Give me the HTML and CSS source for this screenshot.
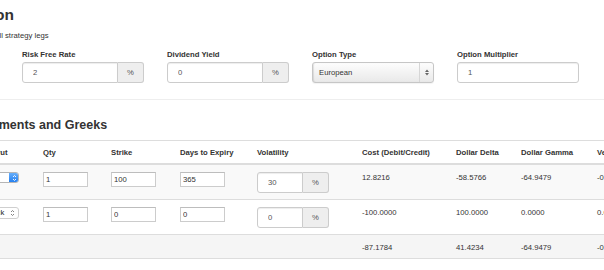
FILE: index.html
```html
<!DOCTYPE html>
<html>
<head>
<meta charset="utf-8">
<title>Option Strategy</title>
<link rel="stylesheet" href="styles.css">
</head>
<body>
<div class="page">
  <section class="config">
    <h2 class="title">Option</h2>
    <p class="hint">Used for all strategy legs</p>
    <div class="form-row">
      <div class="field">
        <label>Risk Free Rate</label>
        <div class="input-group">
          <input class="control joined" value="2">
          <span class="addon">%</span>
        </div>
      </div>
      <div class="field">
        <label>Dividend Yield</label>
        <div class="input-group">
          <input class="control joined" value="0">
          <span class="addon">%</span>
        </div>
      </div>
      <div class="field">
        <label>Option Type</label>
        <div class="select">
          <span class="select-text">European</span>
          <span class="select-arrow">
            <svg width="4" height="7" viewBox="0 0 4 7"><path d="M0 3 L2 0.5 L4 3 Z M0 4 L2 6.5 L4 4 Z" fill="#666"/></svg>
          </span>
        </div>
      </div>
      <div class="field">
        <label>Option Multiplier</label>
        <input class="control" value="1">
      </div>
    </div>
  </section>

  <hr class="divider">

  <section class="legs-section">
    <h3 class="subtitle">Instruments and Greeks</h3>
    <table class="legs">
      <colgroup>
        <col class="w-num"><col class="w-type"><col class="w-qty"><col class="w-strike"><col class="w-days"><col class="w-vol"><col class="w-cost"><col class="w-delta"><col class="w-gamma"><col class="w-vega"><col class="w-theta">
      </colgroup>
      <thead>
        <tr>
          <th>#</th>
          <th class="type-head">Call/Put</th>
          <th>Qty</th>
          <th>Strike</th>
          <th>Days to Expiry</th>
          <th>Volatility</th>
          <th>Cost (Debit/Credit)</th>
          <th>Dollar Delta</th>
          <th>Dollar Gamma</th>
          <th>Vega</th>
          <th>Theta</th>
        </tr>
      </thead>
      <tbody>
        <tr class="odd">
          <td>1</td>
          <td>
            <div class="os-select active">
              <span class="os-text">Call</span>
              <span class="os-stepper">
                <svg width="5" height="8" viewBox="0 0 5 8"><path d="M1 3 L2.5 1.5 L4 3 M1 5 L2.5 6.5 L4 5" fill="none" stroke="#fff" stroke-width="0.9"/></svg>
              </span>
            </div>
          </td>
          <td><input class="num" value="1"></td>
          <td><input class="num" value="100"></td>
          <td><input class="num" value="365"></td>
          <td>
            <div class="input-group vol">
              <input class="control joined" value="30">
              <span class="addon">%</span>
            </div>
          </td>
          <td>12.8216</td>
          <td>-58.5766</td>
          <td>-64.9479</td>
          <td>-0.3821</td>
          <td>-1.2040</td>
        </tr>
        <tr>
          <td>2</td>
          <td>
            <div class="os-select">
              <span class="os-text">Stock</span>
              <span class="os-chevrons">
                <svg width="5" height="8" viewBox="0 0 5 8"><path d="M1 3 L2.5 1.5 L4 3 M1 5 L2.5 6.5 L4 5" fill="none" stroke="#777" stroke-width="0.9"/></svg>
              </span>
            </div>
          </td>
          <td><input class="num" value="1"></td>
          <td><input class="num" value="0"></td>
          <td><input class="num" value="0"></td>
          <td>
            <div class="input-group vol">
              <input class="control joined" value="0">
              <span class="addon">%</span>
            </div>
          </td>
          <td>-100.0000</td>
          <td>100.0000</td>
          <td>0.0000</td>
          <td>0.0000</td>
          <td>0.0000</td>
        </tr>
      </tbody>
      <tfoot>
        <tr>
          <td></td>
          <td></td>
          <td></td>
          <td></td>
          <td></td>
          <td></td>
          <td>-87.1784</td>
          <td>41.4234</td>
          <td>-64.9479</td>
          <td>-0.3821</td>
          <td>-1.2040</td>
        </tr>
      </tfoot>
    </table>
  </section>
</div>
</body>
</html>
```

FILE: styles.css
```css
html, body {
  margin: 0;
  padding: 0;
  overflow: hidden;
  background: #fff;
}

body {
  font-family: "Liberation Sans", Arial, Helvetica, sans-serif;
  font-size: 7.7px;
  line-height: 11px;
  color: #333;
}

.page {
  margin-left: -36px;
  width: 820px;
  padding-top: 6px;
}

.title {
  margin: 0;
  font-size: 15.5px;
  line-height: 17px;
  font-weight: bold;
  color: #333;
}

.hint {
  margin: 7px 0 0;
}

.form-row {
  display: grid;
  grid-template-columns: repeat(4, 122px);
  column-gap: 23px;
  padding-left: 58px;
  margin-top: 8px;
}

.field label {
  display: block;
  font-weight: bold;
  margin-bottom: 2px;
}

.input-group {
  display: flex;
  height: 21px;
}

.control {
  display: block;
  box-sizing: border-box;
  width: 100%;
  min-width: 0;
  height: 21px;
  margin: 0;
  border: 1px solid #ccc;
  border-radius: 3px;
  padding: 0 0 0 10px;
  font: inherit;
  color: #555;
  background: #fff;
  box-shadow: inset 0 1px 1px rgba(0, 0, 0, 0.075);
  outline: none;
}

.control.joined {
  flex: 1;
  border-radius: 3px 0 0 3px;
}

.addon {
  flex: 0 0 26px;
  box-sizing: border-box;
  border: 1px solid #ccc;
  border-left: 0;
  border-radius: 0 3px 3px 0;
  background: #eee;
  display: flex;
  align-items: center;
  justify-content: center;
  color: #555;
}

.select {
  display: flex;
  align-items: stretch;
  box-sizing: border-box;
  height: 21px;
  border: 1px solid #c6c6c6;
  border-radius: 3px;
  background: linear-gradient(#fdfdfd, #e9e9e9);
  box-shadow: inset 1px 0 1px rgba(0, 0, 0, 0.1), 0 1px 1px rgba(0, 0, 0, 0.05);
}

.select-text {
  flex: 1;
  display: flex;
  align-items: center;
  padding-left: 6px;
  color: #333;
}

.select-arrow {
  flex: 0 0 13px;
  border-left: 1px solid #d6d6d6;
  display: flex;
  align-items: center;
  justify-content: center;
}

.divider {
  margin: 16px 0 0;
  height: 0;
  border: 0;
  border-top: 1px solid #eee;
}

.subtitle {
  margin: 18px 0 8px;
  font-size: 12.5px;
  line-height: 14px;
  font-weight: bold;
  color: #333;
}

.legs {
  border-collapse: collapse;
  table-layout: fixed;
  width: 786px;
}

.w-num { width: 14px; }
.w-type { width: 60px; }
.w-qty { width: 68px; }
.w-strike { width: 69px; }
.w-days { width: 77px; }
.w-vol { width: 105px; }
.w-cost { width: 94px; }
.w-delta { width: 65px; }
.w-gamma { width: 76px; }
.w-vega { width: 78px; }
.w-theta { width: 80px; }

.legs th {
  text-align: left;
  font-weight: bold;
  white-space: nowrap;
  overflow: hidden;
  padding: 6px 5px 5px;
  border-top: 1px solid #ddd;
  border-bottom: 2px solid #ddd;
  vertical-align: bottom;
}

.legs th.type-head {
  padding-left: 1px;
}

.legs td {
  padding: 7px 5px 6px;
  border-top: 1px solid #ddd;
  vertical-align: top;
  white-space: nowrap;
}

.legs tbody tr.odd td {
  background: #f9f9f9;
}

.legs tfoot td {
  padding: 7px 5px 5px;
  background: #f5f5f5;
  border-bottom: 1px solid #ddd;
}

.num {
  display: block;
  box-sizing: border-box;
  width: 45px;
  height: 15px;
  margin: 0;
  padding: 0 2px;
  border: 1px solid #ccc;
  border-top-color: #bdbdbd;
  font: inherit;
  color: #333;
  background: #fff;
  outline: none;
}

.input-group.vol {
  width: 72px;
}

.os-select {
  display: flex;
  box-sizing: border-box;
  width: 36px;
  height: 12px;
  border: 1px solid #cfcfcf;
  border-radius: 3px;
  background: #fff;
  overflow: hidden;
}

.os-select.active {
  height: 11px;
  border-color: #b5b5b5;
}

.os-text {
  flex: 1;
  padding-left: 1px;
  line-height: 10px;
  overflow: hidden;
  color: #222;
}

.os-stepper {
  flex: 0 0 10px;
  margin: -1px -1px -1px 0;
  border-radius: 0 3px 3px 0;
  background: linear-gradient(#6db3fb, #1f7cf0);
  display: flex;
  align-items: center;
  justify-content: center;
}

.os-chevrons {
  flex: 0 0 7px;
  padding-right: 2px;
  display: flex;
  align-items: center;
  justify-content: center;
}
```
